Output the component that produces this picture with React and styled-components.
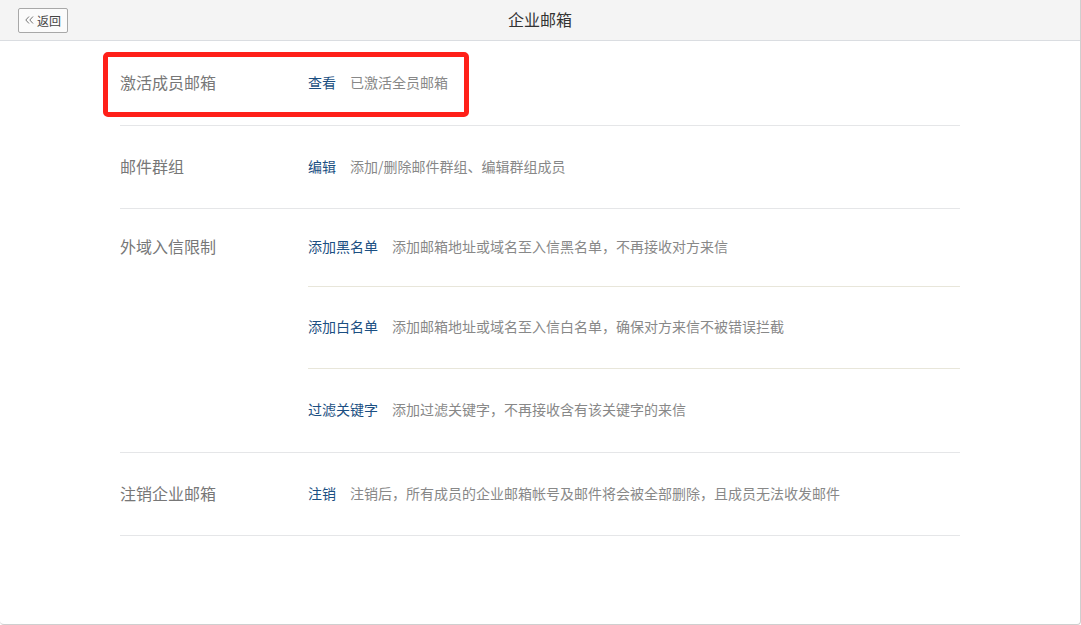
import React from 'react'
import styled, { createGlobalStyle } from 'styled-components'

const GlobalStyle = createGlobalStyle`
  html, body {
    margin: 0;
    padding: 0;
    background: #ffffff;
  }
  body {
    font-family: "Noto Sans CJK SC", "Noto Sans", sans-serif;
  }
`

const Frame = styled.div`
  width: 1080px;
  height: 624px;
  border-right: 1px solid #cfcfcf;
  border-bottom: 1px solid #cfcfcf;
  border-bottom-left-radius: 4px;
  border-bottom-right-radius: 4px;
  background: #ffffff;
  overflow: hidden;
`

const Header = styled.header`
  display: grid;
  grid-template-columns: 1fr auto 1fr;
  align-items: center;
  height: 40px;
  background: #f4f4f4;
  border-bottom: 1px solid #dadde1;
`

const BackButton = styled.button`
  justify-self: start;
  margin-left: 18px;
  display: flex;
  align-items: center;
  gap: 3px;
  width: 50px;
  height: 25px;
  padding: 0 0 0 6px;
  border: 1px solid #a8a8a8;
  border-radius: 2px;
  background: #fbfbfb;
  color: #444;
  font-family: inherit;
  font-size: 12px;
  cursor: pointer;
`

const Title = styled.h1`
  margin: 0 0 2px;
  font-size: 16px;
  font-weight: normal;
  color: #333;
`

const Content = styled.main`
  padding: 0 120px;
`

const Row = styled.section`
  position: relative;
  display: flex;
  border-bottom: 1px solid #e5e6e8;
`

const Label = styled.div`
  box-sizing: border-box;
  width: 188px;
  flex-shrink: 0;
  height: ${({ $h }) => $h}px;
  padding-bottom: 3px;
  display: flex;
  align-items: center;
  font-size: 16px;
  color: #777;
`

const Items = styled.div`
  flex: 1;
  display: flex;
  flex-direction: column;
`

const Item = styled.div`
  box-sizing: border-box;
  display: flex;
  align-items: center;
  gap: 14px;
  height: ${({ $h }) => $h}px;
  padding-bottom: 3px;
  font-size: 14px;
  & + & {
    border-top: 1px solid #e8e6da;
  }
`

const ActionLink = styled.a`
  color: #1b4f82;
  text-decoration: none;
  cursor: pointer;
`

const Desc = styled.span`
  color: #888;
`

const Highlight = styled.div`
  position: absolute;
  left: -17px;
  top: 11px;
  width: 356px;
  height: 55px;
  border: 5px solid #ff2019;
  border-radius: 5px;
  pointer-events: none;
`

const sections = [
  {
    label: '激活成员邮箱',
    highlight: true,
    items: [{ action: '查看', desc: '已激活全员邮箱', h: 84 }],
  },
  {
    label: '邮件群组',
    items: [{ action: '编辑', desc: '添加/删除邮件群组、编辑群组成员', h: 82 }],
  },
  {
    label: '外域入信限制',
    items: [
      { action: '添加黑名单', desc: '添加邮箱地址或域名至入信黑名单，不再接收对方来信', h: 77 },
      { action: '添加白名单', desc: '添加邮箱地址或域名至入信白名单，确保对方来信不被错误拦截', h: 82 },
      { action: '过滤关键字', desc: '添加过滤关键字，不再接收含有该关键字的来信', h: 84 },
    ],
  },
  {
    label: '注销企业邮箱',
    items: [{ action: '注销', desc: '注销后，所有成员的企业邮箱帐号及邮件将会被全部删除，且成员无法收发邮件', h: 82 }],
  },
]

const App = () => {
  return (
    <>
      <GlobalStyle />
      <Frame>
        <Header>
          <BackButton>
            <svg width="9" height="8" viewBox="0 0 9 8" fill="none" stroke="#666" strokeWidth="0.9">
              <path d="M4 0.5L0.8 4L4 7.5M8 0.5L4.8 4L8 7.5" />
            </svg>
            返回
          </BackButton>
          <Title>企业邮箱</Title>
          <div />
        </Header>
        <Content>
          {sections.map((s) => (
            <Row key={s.label}>
              <Label $h={s.items[0].h}>{s.label}</Label>
              <Items>
                {s.items.map((it) => (
                  <Item key={it.action} $h={it.h}>
                    <ActionLink>{it.action}</ActionLink>
                    <Desc>{it.desc}</Desc>
                  </Item>
                ))}
              </Items>
              {s.highlight && <Highlight />}
            </Row>
          ))}
        </Content>
      </Frame>
    </>
  )
}

export default App
